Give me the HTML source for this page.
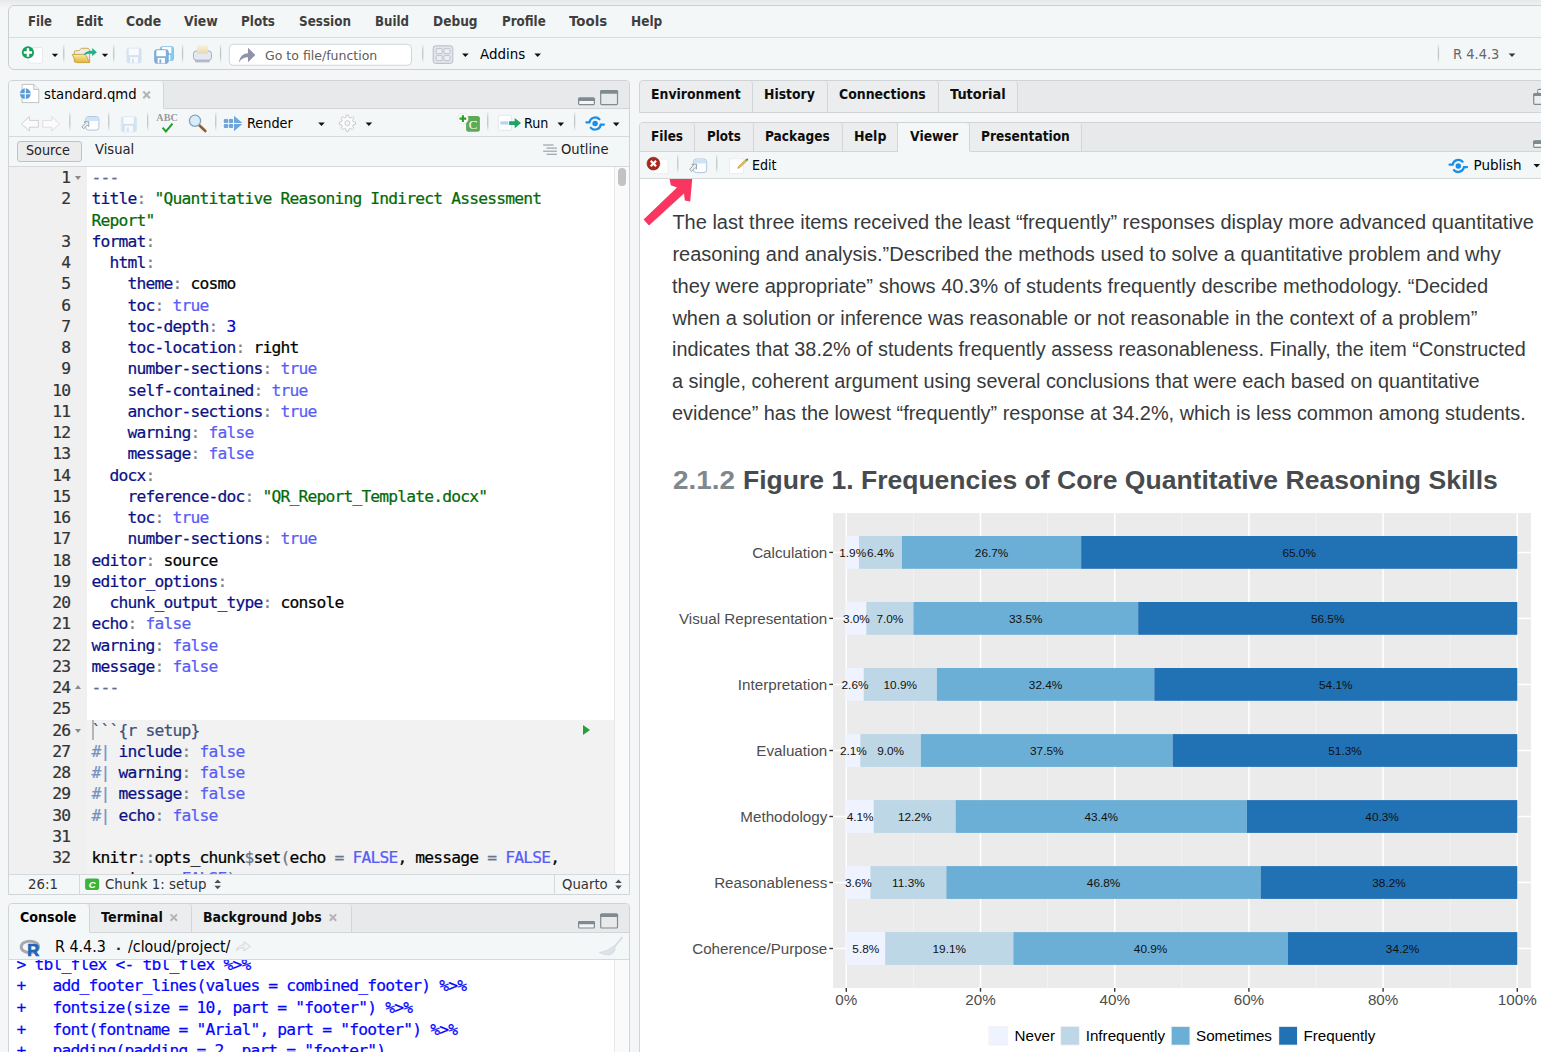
<!DOCTYPE html>
<html lang="en">
<head>
<meta charset="utf-8">
<title>RStudio</title>
<style>
html,body{margin:0;padding:0;}
body{width:1541px;height:1052px;overflow:hidden;position:relative;background:#f5f6f7;font-family:"DejaVu Sans","Liberation Sans",sans-serif;font-size:13.5px;}
div,svg{position:absolute;box-sizing:border-box;}
.t{position:absolute;white-space:pre;line-height:20px;height:20px;transform-origin:0 50%;}
.pane{border:1px solid #d1d4d7;border-radius:4px 4px 0 0;background:#f4f7f8;overflow:hidden;}
.strip{background:#e8e9eb;left:0;right:0;top:0;border-bottom:1px solid #d3d6d9;}
.tab{top:0;border-right:1px solid #d3d6d9;border-bottom:1px solid #d3d6d9;border-radius:3px 4px 0 0;background:#ecedef;}
.tab.first{border-radius:3px 4px 0 0;}
.tab.sel{background:#f4f7f8;border-bottom-color:#f4f7f8;}
.hl{left:0;right:0;height:1px;background:#d6d9dc;}
.sep{width:1px;background:#cfd2d5;box-shadow:1px 0 0 #fff;}
.arr{width:0;height:0;border-left:3.5px solid transparent;border-right:3.5px solid transparent;border-top:4px solid #222;}
.code{font-family:"DejaVu Sans Mono","Liberation Mono",monospace;font-size:16.3px;letter-spacing:-0.81px;-webkit-text-stroke:0.22px currentColor;white-space:pre;line-height:21.25px;height:21.25px;}
.ln{text-align:right;color:#333;}
</style>
</head>
<body>
<!-- top gradient -->
<div style="left:0;top:0;width:1541px;height:8px;background:linear-gradient(#e7e8ea,#f5f6f7);"></div>
<!-- main menubar + toolbar frame -->
<div style="left:8px;top:5px;width:1545px;height:65px;border:1px solid #cdd0d3;border-radius:6px;background:#f4f7f8;">
  <div class="hl" style="top:31px;background:#d9dcde;"></div>
</div>

<!-- SOURCE PANE -->
<div class="pane" id="src" style="left:8px;top:80px;width:622px;height:815px;">
  <div class="strip" style="height:28px;"></div>
  <div class="tab first sel" style="left:0;width:155px;height:28px;"></div>
  <div class="hl" style="top:55px;"></div>
  <div class="hl" style="top:85px;"></div>
  <!-- Source button -->
  <div style="left:8px;top:60px;width:65px;height:21px;border:1px solid #b9c3cd;border-radius:3px;background:#ececec;"></div>
  <div id="ed" style="left:0;top:86px;width:620px;height:707px;background:#fff;overflow:hidden;">
<div style="left:0;top:0;width:78px;height:707px;background:#f0f0f0;"></div>
<div style="left:78px;top:552.50px;width:527px;height:300px;background:#f2f2f2;"></div>
<div style="left:605px;top:0;width:15px;height:707px;background:#fafafa;border-left:1px solid #e8e8e8;"></div>
<div style="left:609px;top:1px;width:8px;height:18px;border-radius:4px;background:#c2c2c2;"></div>
<div class="code ln" style="left:0;top:0.00px;width:61.2px;">1</div>
<div style="left:66px;top:9.00px;border-left:3px solid transparent;border-right:3px solid transparent;border-top:4px solid #8a8a8a;width:0;height:0;"></div>
<div class="code cl" style="left:82.6px;top:0.00px;"><span style="color:#5d6d8e">---</span></div>
<div class="code ln" style="left:0;top:21.25px;width:61.2px;">2</div>
<div class="code cl" style="left:82.6px;top:21.25px;"><span style="color:#0b1085">title</span><span style="color:#77828e">:</span> <span style="color:#036a07">&quot;Quantitative Reasoning Indirect Assessment</span></div>
<div class="code cl" style="left:82.6px;top:42.50px;"><span style="color:#036a07">Report&quot;</span></div>
<div class="code ln" style="left:0;top:63.75px;width:61.2px;">3</div>
<div class="code cl" style="left:82.6px;top:63.75px;"><span style="color:#0b1085">format</span><span style="color:#77828e">:</span></div>
<div class="code ln" style="left:0;top:85.00px;width:61.2px;">4</div>
<div class="code cl" style="left:82.6px;top:85.00px;">  <span style="color:#0b1085">html</span><span style="color:#77828e">:</span></div>
<div class="code ln" style="left:0;top:106.25px;width:61.2px;">5</div>
<div class="code cl" style="left:82.6px;top:106.25px;">    <span style="color:#0b1085">theme</span><span style="color:#77828e">:</span> <span style="color:#000">cosmo</span></div>
<div class="code ln" style="left:0;top:127.50px;width:61.2px;">6</div>
<div class="code cl" style="left:82.6px;top:127.50px;">    <span style="color:#0b1085">toc</span><span style="color:#77828e">:</span> <span style="color:#585cf6">true</span></div>
<div class="code ln" style="left:0;top:148.75px;width:61.2px;">7</div>
<div class="code cl" style="left:82.6px;top:148.75px;">    <span style="color:#0b1085">toc-depth</span><span style="color:#77828e">:</span> <span style="color:#0000cd">3</span></div>
<div class="code ln" style="left:0;top:170.00px;width:61.2px;">8</div>
<div class="code cl" style="left:82.6px;top:170.00px;">    <span style="color:#0b1085">toc-location</span><span style="color:#77828e">:</span> <span style="color:#000">right</span></div>
<div class="code ln" style="left:0;top:191.25px;width:61.2px;">9</div>
<div class="code cl" style="left:82.6px;top:191.25px;">    <span style="color:#0b1085">number-sections</span><span style="color:#77828e">:</span> <span style="color:#585cf6">true</span></div>
<div class="code ln" style="left:0;top:212.50px;width:61.2px;">10</div>
<div class="code cl" style="left:82.6px;top:212.50px;">    <span style="color:#0b1085">self-contained</span><span style="color:#77828e">:</span> <span style="color:#585cf6">true</span></div>
<div class="code ln" style="left:0;top:233.75px;width:61.2px;">11</div>
<div class="code cl" style="left:82.6px;top:233.75px;">    <span style="color:#0b1085">anchor-sections</span><span style="color:#77828e">:</span> <span style="color:#585cf6">true</span></div>
<div class="code ln" style="left:0;top:255.00px;width:61.2px;">12</div>
<div class="code cl" style="left:82.6px;top:255.00px;">    <span style="color:#0b1085">warning</span><span style="color:#77828e">:</span> <span style="color:#585cf6">false</span></div>
<div class="code ln" style="left:0;top:276.25px;width:61.2px;">13</div>
<div class="code cl" style="left:82.6px;top:276.25px;">    <span style="color:#0b1085">message</span><span style="color:#77828e">:</span> <span style="color:#585cf6">false</span></div>
<div class="code ln" style="left:0;top:297.50px;width:61.2px;">14</div>
<div class="code cl" style="left:82.6px;top:297.50px;">  <span style="color:#0b1085">docx</span><span style="color:#77828e">:</span></div>
<div class="code ln" style="left:0;top:318.75px;width:61.2px;">15</div>
<div class="code cl" style="left:82.6px;top:318.75px;">    <span style="color:#0b1085">reference-doc</span><span style="color:#77828e">:</span> <span style="color:#036a07">&quot;QR_Report_Template.docx&quot;</span></div>
<div class="code ln" style="left:0;top:340.00px;width:61.2px;">16</div>
<div class="code cl" style="left:82.6px;top:340.00px;">    <span style="color:#0b1085">toc</span><span style="color:#77828e">:</span> <span style="color:#585cf6">true</span></div>
<div class="code ln" style="left:0;top:361.25px;width:61.2px;">17</div>
<div class="code cl" style="left:82.6px;top:361.25px;">    <span style="color:#0b1085">number-sections</span><span style="color:#77828e">:</span> <span style="color:#585cf6">true</span></div>
<div class="code ln" style="left:0;top:382.50px;width:61.2px;">18</div>
<div class="code cl" style="left:82.6px;top:382.50px;"><span style="color:#0b1085">editor</span><span style="color:#77828e">:</span> <span style="color:#000">source</span></div>
<div class="code ln" style="left:0;top:403.75px;width:61.2px;">19</div>
<div class="code cl" style="left:82.6px;top:403.75px;"><span style="color:#0b1085">editor_options</span><span style="color:#77828e">:</span></div>
<div class="code ln" style="left:0;top:425.00px;width:61.2px;">20</div>
<div class="code cl" style="left:82.6px;top:425.00px;">  <span style="color:#0b1085">chunk_output_type</span><span style="color:#77828e">:</span> <span style="color:#000">console</span></div>
<div class="code ln" style="left:0;top:446.25px;width:61.2px;">21</div>
<div class="code cl" style="left:82.6px;top:446.25px;"><span style="color:#0b1085">echo</span><span style="color:#77828e">:</span> <span style="color:#585cf6">false</span></div>
<div class="code ln" style="left:0;top:467.50px;width:61.2px;">22</div>
<div class="code cl" style="left:82.6px;top:467.50px;"><span style="color:#0b1085">warning</span><span style="color:#77828e">:</span> <span style="color:#585cf6">false</span></div>
<div class="code ln" style="left:0;top:488.75px;width:61.2px;">23</div>
<div class="code cl" style="left:82.6px;top:488.75px;"><span style="color:#0b1085">message</span><span style="color:#77828e">:</span> <span style="color:#585cf6">false</span></div>
<div class="code ln" style="left:0;top:510.00px;width:61.2px;">24</div>
<div style="left:66px;top:518.00px;border-left:3px solid transparent;border-right:3px solid transparent;border-bottom:4px solid #8a8a8a;width:0;height:0;"></div>
<div class="code cl" style="left:82.6px;top:510.00px;"><span style="color:#5d6d8e">---</span></div>
<div class="code ln" style="left:0;top:531.25px;width:61.2px;">25</div>
<div class="code ln" style="left:0;top:552.50px;width:61.2px;">26</div>
<div style="left:66px;top:561.50px;border-left:3px solid transparent;border-right:3px solid transparent;border-top:4px solid #8a8a8a;width:0;height:0;"></div>
<div class="code cl" style="left:82.6px;top:552.50px;"><span style="color:#3f4f7d">```{r setup}</span></div>
<div class="code ln" style="left:0;top:573.75px;width:61.2px;">27</div>
<div class="code cl" style="left:82.6px;top:573.75px;"><span style="color:#7593c2">#| </span><span style="color:#0b1085">include</span><span style="color:#77828e">:</span> <span style="color:#585cf6">false</span></div>
<div class="code ln" style="left:0;top:595.00px;width:61.2px;">28</div>
<div class="code cl" style="left:82.6px;top:595.00px;"><span style="color:#7593c2">#| </span><span style="color:#0b1085">warning</span><span style="color:#77828e">:</span> <span style="color:#585cf6">false</span></div>
<div class="code ln" style="left:0;top:616.25px;width:61.2px;">29</div>
<div class="code cl" style="left:82.6px;top:616.25px;"><span style="color:#7593c2">#| </span><span style="color:#0b1085">message</span><span style="color:#77828e">:</span> <span style="color:#585cf6">false</span></div>
<div class="code ln" style="left:0;top:637.50px;width:61.2px;">30</div>
<div class="code cl" style="left:82.6px;top:637.50px;"><span style="color:#7593c2">#| </span><span style="color:#0b1085">echo</span><span style="color:#77828e">:</span> <span style="color:#585cf6">false</span></div>
<div class="code ln" style="left:0;top:658.75px;width:61.2px;">31</div>
<div class="code ln" style="left:0;top:680.00px;width:61.2px;">32</div>
<div class="code cl" style="left:82.6px;top:680.00px;">knitr<span style="color:#687687">::</span>opts_chunk<span style="color:#687687">$</span>set<span style="color:#687687">(</span>echo <span style="color:#687687">=</span> <span style="color:#585cf6">FALSE</span>, message <span style="color:#687687">=</span> <span style="color:#585cf6">FALSE</span>,</div>
<div class="code cl" style="left:82.6px;top:701.25px;">warning <span style="color:#687687">=</span> <span style="color:#585cf6">FALSE</span><span style="color:#687687">)</span></div>
<div style="left:83px;top:553.00px;width:2px;height:20px;background:#b5b5b5;"></div>
<div style="left:574px;top:558.00px;width:0;height:0;border-top:5px solid transparent;border-bottom:5px solid transparent;border-left:7px solid #2a9d3c;"></div>
</div>
  <!-- status bar -->
  <div style="left:0;right:0;top:793px;height:22px;background:#f4f7f8;border-top:1px solid #d6d9dc;"></div>
  <div style="left:70px;top:794px;width:1px;height:21px;background:#d6d9dc;"></div>
  <div style="left:545px;top:794px;width:1px;height:21px;background:#d6d9dc;"></div>
</div>

<!-- CONSOLE PANE -->
<div class="pane" id="con" style="left:8px;top:903px;width:622px;height:160px;">
  <div class="strip" style="height:29px;"></div>
  <div class="tab first sel" style="left:0;width:81px;height:29px;"></div>
  <div class="tab" style="left:81px;width:102px;height:29px;"></div>
  <div class="tab" style="left:183px;width:160px;height:29px;"></div>
  <div class="hl" style="top:55px;"></div>
  <div id="co" style="left:0;top:56px;width:620px;height:100px;background:#fff;overflow:hidden;">
<div style="left:605px;top:0;width:15px;height:100px;background:#fafafa;border-left:1px solid #e8e8e8;"></div>
<div class="code cc" style="left:7.6px;top:-6.20px;line-height:21.6px;color:#0505ff;">&gt; tbl_flex &lt;- tbl_flex %&gt;%</div>
<div class="code cc" style="left:7.6px;top:15.40px;line-height:21.6px;color:#0505ff;">+   add_footer_lines(values = combined_footer) %&gt;%</div>
<div class="code cc" style="left:7.6px;top:37.00px;line-height:21.6px;color:#0505ff;">+   fontsize(size = 10, part = &quot;footer&quot;) %&gt;%</div>
<div class="code cc" style="left:7.6px;top:58.60px;line-height:21.6px;color:#0505ff;">+   font(fontname = &quot;Arial&quot;, part = &quot;footer&quot;) %&gt;%</div>
<div class="code cc" style="left:7.6px;top:80.20px;line-height:21.6px;color:#0505ff;">+   padding(padding = 2, part = &quot;footer&quot;)</div>
</div>
</div>

<!-- ENVIRONMENT PANE (collapsed) -->
<div class="pane" id="env" style="left:639px;top:80px;width:920px;height:33px;border-radius:4px 0 0 0;background:#e8e9eb;">
  <div class="tab first" style="left:0;width:113px;height:32px;border-bottom:none;"></div>
  <div class="tab" style="left:113px;width:75px;height:32px;border-bottom:none;"></div>
  <div class="tab" style="left:188px;width:111px;height:32px;border-bottom:none;"></div>
  <div class="tab" style="left:299px;width:79px;height:32px;border-bottom:none;"></div>
</div>

<!-- VIEWER PANE -->
<div class="pane" id="vw" style="left:639px;top:122px;width:920px;height:940px;border-radius:4px 0 0 0;">
  <div class="strip" style="height:29px;"></div>
  <div class="tab first" style="left:0;width:55px;height:29px;"></div>
  <div class="tab" style="left:55px;width:59px;height:29px;"></div>
  <div class="tab" style="left:114px;width:89px;height:29px;"></div>
  <div class="tab" style="left:203px;width:55px;height:29px;"></div>
  <div class="tab sel" style="left:258px;width:72px;height:29px;"></div>
  <div class="tab" style="left:330px;width:112px;height:29px;"></div>
  <div class="hl" style="top:55px;"></div>
  <div style="left:0;top:56px;width:920px;height:900px;background:#fff;"></div>
</div>

<!--VIEWER-->
<svg style="left:640px;top:500px;" width="901" height="552" viewBox="0 0 901 552" font-family="Liberation Sans, sans-serif">
<rect x="193" y="13" width="698" height="475" fill="#ebebeb"/>
<line x1="273.4" x2="273.4" y1="13" y2="488" stroke="#f5f5f5" stroke-width="0.8"/>
<line x1="407.6" x2="407.6" y1="13" y2="488" stroke="#f5f5f5" stroke-width="0.8"/>
<line x1="541.8" x2="541.8" y1="13" y2="488" stroke="#f5f5f5" stroke-width="0.8"/>
<line x1="676.0" x2="676.0" y1="13" y2="488" stroke="#f5f5f5" stroke-width="0.8"/>
<line x1="810.2" x2="810.2" y1="13" y2="488" stroke="#f5f5f5" stroke-width="0.8"/>
<line x1="206.3" x2="206.3" y1="13" y2="488" stroke="#fff" stroke-width="1.5"/>
<line x1="206.3" x2="206.3" y1="488" y2="491.7" stroke="#333" stroke-width="1.4"/>
<text x="206.3" y="504.6" font-size="15.2" fill="#4d4d4d" text-anchor="middle">0%</text>
<line x1="340.5" x2="340.5" y1="13" y2="488" stroke="#fff" stroke-width="1.5"/>
<line x1="340.5" x2="340.5" y1="488" y2="491.7" stroke="#333" stroke-width="1.4"/>
<text x="340.5" y="504.6" font-size="15.2" fill="#4d4d4d" text-anchor="middle">20%</text>
<line x1="474.7" x2="474.7" y1="13" y2="488" stroke="#fff" stroke-width="1.5"/>
<line x1="474.7" x2="474.7" y1="488" y2="491.7" stroke="#333" stroke-width="1.4"/>
<text x="474.7" y="504.6" font-size="15.2" fill="#4d4d4d" text-anchor="middle">40%</text>
<line x1="608.9" x2="608.9" y1="13" y2="488" stroke="#fff" stroke-width="1.5"/>
<line x1="608.9" x2="608.9" y1="488" y2="491.7" stroke="#333" stroke-width="1.4"/>
<text x="608.9" y="504.6" font-size="15.2" fill="#4d4d4d" text-anchor="middle">60%</text>
<line x1="743.1" x2="743.1" y1="13" y2="488" stroke="#fff" stroke-width="1.5"/>
<line x1="743.1" x2="743.1" y1="488" y2="491.7" stroke="#333" stroke-width="1.4"/>
<text x="743.1" y="504.6" font-size="15.2" fill="#4d4d4d" text-anchor="middle">80%</text>
<line x1="877.3" x2="877.3" y1="13" y2="488" stroke="#fff" stroke-width="1.5"/>
<line x1="877.3" x2="877.3" y1="488" y2="491.7" stroke="#333" stroke-width="1.4"/>
<text x="877.3" y="504.6" font-size="15.2" fill="#4d4d4d" text-anchor="middle">100%</text>
<line x1="193" x2="891" y1="52.4" y2="52.4" stroke="#fff" stroke-width="1.5"/>
<line x1="193" x2="891" y1="118.4" y2="118.4" stroke="#fff" stroke-width="1.5"/>
<line x1="193" x2="891" y1="184.4" y2="184.4" stroke="#fff" stroke-width="1.5"/>
<line x1="193" x2="891" y1="250.5" y2="250.5" stroke="#fff" stroke-width="1.5"/>
<line x1="193" x2="891" y1="316.5" y2="316.5" stroke="#fff" stroke-width="1.5"/>
<line x1="193" x2="891" y1="382.5" y2="382.5" stroke="#fff" stroke-width="1.5"/>
<line x1="193" x2="891" y1="448.5" y2="448.5" stroke="#fff" stroke-width="1.5"/>
<line x1="189.3" x2="193" y1="52.4" y2="52.4" stroke="#333" stroke-width="1.4"/>
<text x="187.29999999999995" y="57.7" font-size="15.2" fill="#4d4d4d" text-anchor="end">Calculation</text>
<rect x="206.30" y="36.0" width="12.75" height="32.8" fill="#eff3ff"/>
<rect x="219.05" y="36.0" width="42.94" height="32.8" fill="#bdd7e7"/>
<rect x="261.99" y="36.0" width="179.16" height="32.8" fill="#6baed6"/>
<rect x="441.15" y="36.0" width="436.15" height="32.8" fill="#2171b5"/>
<text x="212.7" y="56.6" font-size="11.8" fill="#111" text-anchor="middle">1.9%</text>
<text x="240.5" y="56.6" font-size="11.8" fill="#111" text-anchor="middle">6.4%</text>
<text x="351.6" y="56.6" font-size="11.8" fill="#111" text-anchor="middle">26.7%</text>
<text x="659.2" y="56.6" font-size="11.8" fill="#111" text-anchor="middle">65.0%</text>
<line x1="189.3" x2="193" y1="118.4" y2="118.4" stroke="#333" stroke-width="1.4"/>
<text x="187.29999999999995" y="123.7" font-size="15.2" fill="#4d4d4d" text-anchor="end">Visual Representation</text>
<rect x="206.30" y="102.0" width="20.13" height="32.8" fill="#eff3ff"/>
<rect x="226.43" y="102.0" width="46.97" height="32.8" fill="#bdd7e7"/>
<rect x="273.40" y="102.0" width="224.78" height="32.8" fill="#6baed6"/>
<rect x="498.18" y="102.0" width="379.12" height="32.8" fill="#2171b5"/>
<text x="216.4" y="122.6" font-size="11.8" fill="#111" text-anchor="middle">3.0%</text>
<text x="249.9" y="122.6" font-size="11.8" fill="#111" text-anchor="middle">7.0%</text>
<text x="385.8" y="122.6" font-size="11.8" fill="#111" text-anchor="middle">33.5%</text>
<text x="687.7" y="122.6" font-size="11.8" fill="#111" text-anchor="middle">56.5%</text>
<line x1="189.3" x2="193" y1="184.4" y2="184.4" stroke="#333" stroke-width="1.4"/>
<text x="187.29999999999995" y="189.7" font-size="15.2" fill="#4d4d4d" text-anchor="end">Interpretation</text>
<rect x="206.30" y="168.0" width="17.45" height="32.8" fill="#eff3ff"/>
<rect x="223.75" y="168.0" width="73.14" height="32.8" fill="#bdd7e7"/>
<rect x="296.88" y="168.0" width="217.40" height="32.8" fill="#6baed6"/>
<rect x="514.29" y="168.0" width="363.01" height="32.8" fill="#2171b5"/>
<text x="215.0" y="188.6" font-size="11.8" fill="#111" text-anchor="middle">2.6%</text>
<text x="260.3" y="188.6" font-size="11.8" fill="#111" text-anchor="middle">10.9%</text>
<text x="405.6" y="188.6" font-size="11.8" fill="#111" text-anchor="middle">32.4%</text>
<text x="695.8" y="188.6" font-size="11.8" fill="#111" text-anchor="middle">54.1%</text>
<line x1="189.3" x2="193" y1="250.5" y2="250.5" stroke="#333" stroke-width="1.4"/>
<text x="187.29999999999995" y="255.8" font-size="15.2" fill="#4d4d4d" text-anchor="end">Evaluation</text>
<rect x="206.30" y="234.1" width="14.11" height="32.8" fill="#eff3ff"/>
<rect x="220.41" y="234.1" width="60.45" height="32.8" fill="#bdd7e7"/>
<rect x="280.86" y="234.1" width="251.88" height="32.8" fill="#6baed6"/>
<rect x="532.73" y="234.1" width="344.57" height="32.8" fill="#2171b5"/>
<text x="213.4" y="254.7" font-size="11.8" fill="#111" text-anchor="middle">2.1%</text>
<text x="250.6" y="254.7" font-size="11.8" fill="#111" text-anchor="middle">9.0%</text>
<text x="406.8" y="254.7" font-size="11.8" fill="#111" text-anchor="middle">37.5%</text>
<text x="705.0" y="254.7" font-size="11.8" fill="#111" text-anchor="middle">51.3%</text>
<line x1="189.3" x2="193" y1="316.5" y2="316.5" stroke="#333" stroke-width="1.4"/>
<text x="187.29999999999995" y="321.8" font-size="15.2" fill="#4d4d4d" text-anchor="end">Methodology</text>
<rect x="206.30" y="300.1" width="27.51" height="32.8" fill="#eff3ff"/>
<rect x="233.81" y="300.1" width="81.86" height="32.8" fill="#bdd7e7"/>
<rect x="315.67" y="300.1" width="291.21" height="32.8" fill="#6baed6"/>
<rect x="606.89" y="300.1" width="270.41" height="32.8" fill="#2171b5"/>
<text x="220.1" y="320.7" font-size="11.8" fill="#111" text-anchor="middle">4.1%</text>
<text x="274.7" y="320.7" font-size="11.8" fill="#111" text-anchor="middle">12.2%</text>
<text x="461.3" y="320.7" font-size="11.8" fill="#111" text-anchor="middle">43.4%</text>
<text x="742.1" y="320.7" font-size="11.8" fill="#111" text-anchor="middle">40.3%</text>
<line x1="189.3" x2="193" y1="382.5" y2="382.5" stroke="#333" stroke-width="1.4"/>
<text x="187.29999999999995" y="387.8" font-size="15.2" fill="#4d4d4d" text-anchor="end">Reasonableness</text>
<rect x="206.30" y="366.1" width="24.18" height="32.8" fill="#eff3ff"/>
<rect x="230.48" y="366.1" width="75.90" height="32.8" fill="#bdd7e7"/>
<rect x="306.38" y="366.1" width="314.34" height="32.8" fill="#6baed6"/>
<rect x="620.72" y="366.1" width="256.58" height="32.8" fill="#2171b5"/>
<text x="218.4" y="386.7" font-size="11.8" fill="#111" text-anchor="middle">3.6%</text>
<text x="268.4" y="386.7" font-size="11.8" fill="#111" text-anchor="middle">11.3%</text>
<text x="463.6" y="386.7" font-size="11.8" fill="#111" text-anchor="middle">46.8%</text>
<text x="749.0" y="386.7" font-size="11.8" fill="#111" text-anchor="middle">38.2%</text>
<line x1="189.3" x2="193" y1="448.5" y2="448.5" stroke="#333" stroke-width="1.4"/>
<text x="187.29999999999995" y="453.8" font-size="15.2" fill="#4d4d4d" text-anchor="end">Coherence/Purpose</text>
<rect x="206.30" y="432.1" width="38.92" height="32.8" fill="#eff3ff"/>
<rect x="245.22" y="432.1" width="128.16" height="32.8" fill="#bdd7e7"/>
<rect x="373.38" y="432.1" width="274.44" height="32.8" fill="#6baed6"/>
<rect x="647.82" y="432.1" width="229.48" height="32.8" fill="#2171b5"/>
<text x="225.8" y="452.7" font-size="11.8" fill="#111" text-anchor="middle">5.8%</text>
<text x="309.3" y="452.7" font-size="11.8" fill="#111" text-anchor="middle">19.1%</text>
<text x="510.6" y="452.7" font-size="11.8" fill="#111" text-anchor="middle">40.9%</text>
<text x="762.6" y="452.7" font-size="11.8" fill="#111" text-anchor="middle">34.2%</text>
<rect x="348.5" y="526" width="19.6" height="19.6" fill="#f2f2f2"/>
<rect x="349.4" y="526.9" width="17.8" height="17.8" fill="#eff3ff"/>
<text x="374.6" y="540.8" font-size="15.2" fill="#000">Never</text>
<rect x="420.2" y="526" width="19.6" height="19.6" fill="#f2f2f2"/>
<rect x="421.1" y="526.9" width="17.8" height="17.8" fill="#bdd7e7"/>
<text x="445.7" y="540.8" font-size="15.2" fill="#000">Infrequently</text>
<rect x="530.8" y="526" width="19.6" height="19.6" fill="#f2f2f2"/>
<rect x="531.7" y="526.9" width="17.8" height="17.8" fill="#6baed6"/>
<text x="556.0" y="540.8" font-size="15.2" fill="#000">Sometimes</text>
<rect x="638.3" y="526" width="19.6" height="19.6" fill="#f2f2f2"/>
<rect x="639.2" y="526.9" width="17.8" height="17.8" fill="#2171b5"/>
<text x="663.5" y="540.8" font-size="15.2" fill="#000">Frequently</text>
</svg>
<svg style="left:0;top:0;" width="1541" height="1052" viewBox="0 0 1541 1052">
<defs><linearGradient id="sg" x1="0" y1="0" x2="0" y2="1"><stop offset="0" stop-color="#c4c7ca" stop-opacity="0.15"/><stop offset="0.3" stop-color="#c4c7ca"/><stop offset="0.7" stop-color="#c4c7ca"/><stop offset="1" stop-color="#c4c7ca" stop-opacity="0.15"/></linearGradient><linearGradient id="pg" x1="0" y1="0" x2="0" y2="1"><stop offset="0" stop-color="#f8f2dc"/><stop offset="1" stop-color="#ead8ae"/></linearGradient></defs>
<rect x="28.400" y="47.500" width="14" height="15.700" rx="1" fill="#fff" stroke="#dfe3ea" stroke-width="0.8"/>
<circle cx="27.950" cy="52.450" r="6.100" fill="#12a05c"/>
<path d="M27.950 48.250v8.400M23.750 52.450h8.400" stroke="#fff" stroke-width="2.500"/>
<path d="M51.8 53.7h6.4l-3.2 3.4z" fill="#111"/>
<rect x="63.1" y="44.5" width="1.3" height="18.0" fill="url(#sg)"/>
<defs><linearGradient id="fg" x1="0" y1="0" x2="0" y2="1"><stop offset="0" stop-color="#f8eba8"/><stop offset="1" stop-color="#e0b538"/></linearGradient></defs>
<path d="M74.300 54.400v-2.400q0-1.300 1.300-1.300h3.300l2.600-2.400h6.500l1.600 1.400v12.300h-15.300z" fill="#ececec" stroke="#c9a23c" stroke-width="0.9" stroke-linejoin="round"/>
<path d="M72.100 54.400h13.300l4.400 8.200h-13.500z" fill="url(#fg)" stroke="#c9a23c" stroke-width="0.9" stroke-linejoin="round"/>
<path d="M83.800 55.200c0.700-3 3.400-4.500 8.400-4.500v-2.600l4.700 4.100-4.700 4.100v-2.600c-3.800-0.100-6.300 0.300-8.400 1.500z" fill="#1cb48a"/>
<path d="M101.8 53.7h6.4l-3.2 3.4z" fill="#111"/>
<rect x="113.1" y="44.5" width="1.3" height="18.0" fill="url(#sg)"/>
<g opacity="1"><rect x="126.8" y="48.1" width="14.5" height="14.9" rx="1.8" fill="#d2e2f1" stroke="#dbe7f3" stroke-width="0.8"/><rect x="128.7" y="48.5" width="10.1" height="6.6" fill="#f8fafc"/><rect x="130.1" y="57.1" width="7.7" height="5.8" fill="#f8fafc"/><rect x="131.9" y="58.7" width="2.0" height="4.2" fill="#d2e2f1"/></g>
<g opacity="1"><rect x="160.4" y="46.7" width="13.1" height="13.8" rx="1.8" fill="#7ccff0" stroke="#7fb6e0" stroke-width="0.8"/><rect x="162.1" y="47.1" width="9.2" height="6.1" fill="#fff"/><rect x="163.3" y="55.1" width="7.0" height="5.4" fill="#fff"/><rect x="165.0" y="56.5" width="1.8" height="3.9" fill="#7ccff0"/></g>
<g opacity="1"><rect x="154.7" y="49.8" width="13.5" height="13.5" rx="1.8" fill="#7fb0e0" stroke="#6b9ccf" stroke-width="0.8"/><rect x="156.4" y="50.2" width="9.4" height="6.0" fill="#fff"/><rect x="157.7" y="58.0" width="7.2" height="5.3" fill="#fff"/><rect x="159.4" y="59.4" width="1.9" height="3.9" fill="#7fb0e0"/></g>
<rect x="181.9" y="44.5" width="1.3" height="18.0" fill="url(#sg)"/>
<rect x="195" y="59.600" width="14.800" height="2.800" rx="0.8" fill="#b9c0cd"/>
<rect x="193.500" y="51" width="18" height="9.200" rx="2.600" fill="#e4e8f1" stroke="#9ea6b8" stroke-width="0.9"/>
<rect x="197" y="45.100" width="10.900" height="8.700" fill="url(#pg)"/>
<rect x="219.9" y="44.5" width="1.3" height="18.0" fill="url(#sg)"/>
<rect x="229.3" y="44.3" width="182.2" height="21" rx="4" fill="#fff" stroke="#d3d6d9" stroke-width="1"/>
<path d="M239 62.5c0.8-6 4-9 9-9.2v-5.6l7.3 7.3-7.3 7.3v-5c-4 0-6.8 1.6-9 5.200z" fill="#8f92a8"/>
<rect x="422.1" y="44.5" width="1.3" height="18.0" fill="url(#sg)"/>
<rect x="433.2" y="45.8" width="19.6" height="17.6" rx="2.5" fill="#e3e4ec" stroke="#b9bcc9" stroke-width="1"/>
<rect x="436.2" y="48.6" width="6" height="5" rx="0.8" fill="#eeeff4" stroke="#b4b7c6" stroke-width="0.8"/>
<rect x="436.2" y="55.6" width="6" height="5" rx="0.8" fill="#eeeff4" stroke="#b4b7c6" stroke-width="0.8"/>
<rect x="444" y="48.6" width="6" height="5" rx="0.8" fill="#eeeff4" stroke="#b4b7c6" stroke-width="0.8"/>
<rect x="444" y="55.6" width="6" height="5" rx="0.8" fill="#eeeff4" stroke="#b4b7c6" stroke-width="0.8"/>
<path d="M462.1 53.4h6.6l-3.3 3.6z" fill="#111"/>
<path d="M534.4 53.4h6.6l-3.3 3.6z" fill="#111"/>
<rect x="1437.8" y="44.5" width="1.3" height="18.0" fill="url(#sg)"/>
<path d="M1508.7 53.5h6.6l-3.3 3.6z" fill="#333"/>
<path d="M22.1 84.4h11.7l5 5v13.2h-16.7z" fill="#fff" stroke="#b8bcc0" stroke-width="0.9"/>
<path d="M33.8 84.4v5h5" fill="#f2f2f2" stroke="#b8bcc0" stroke-width="0.9"/>
<circle cx="25.3" cy="93.7" r="5.4" fill="#5b9bd5"/><path d="M25.3 88.3v10.800M19.9 93.7h10.800" stroke="#fff" stroke-width="1.1"/>
<path d="M143.3 91.6l6.600 6.600M149.900 91.600l-6.600 6.600" stroke="#b3b3b3" stroke-width="2.100"/>
<rect x="578.6" y="98.2" width="15.800" height="6.400" rx="1" fill="#f3f5f6" stroke="#7f8b91" stroke-width="1.2"/>
<path d="M578 100.9v-1.900q0-1.500 1.500-1.500h14q1.500 0 1.500 1.500v1.900z" fill="#7f8b91"/>
<rect x="600.7" y="90.6" width="16.800" height="14" rx="1" fill="#e8e9eb" stroke="#7f8b91" stroke-width="1.2"/>
<path d="M600.100 93.7v-2.200q0-1.500 1.500-1.500h15q1.500 0 1.500 1.500v2.200z" fill="#7f8b91"/>
<rect x="578.6" y="921.6" width="15.800" height="6.400" rx="1" fill="#f3f5f6" stroke="#7f8b91" stroke-width="1.2"/>
<path d="M578 924.3v-1.900q0-1.500 1.500-1.500h14q1.500 0 1.500 1.500v1.900z" fill="#7f8b91"/>
<rect x="600.7" y="914.0" width="16.800" height="14" rx="1" fill="#e8e9eb" stroke="#7f8b91" stroke-width="1.2"/>
<path d="M600.100 917.1v-2.200q0-1.500 1.500-1.500h15q1.500 0 1.500 1.500v2.200z" fill="#7f8b91"/>
<path d="M21.400 123.800l8-7.200v3.800h9v6.800h-9v3.800z" fill="#fbfbfb" stroke="#cfcfcf" stroke-width="1"/>
<path d="M59.700 123.800l-8-7.200v3.800h-9v6.800h9v3.800z" fill="#fbfbfb" stroke="#dedede" stroke-width="1"/>
<rect x="69.2" y="112" width="1.3" height="18.599999999999994" fill="url(#sg)"/>
<rect x="85.6" y="116.5" width="13.300" height="13.600" rx="2.800" fill="#fcfdfe" stroke="#a9bed8" stroke-width="0.9"/>
<path d="M86.1 120.9v-1.700q0-2.200 2.200-2.200h7.900q2.200 0 2.200 2.200v1.700z" fill="#cfe3f7"/>
<path d="M88.8 121.6l-4.700 0.300 1.400 1.400 -3.700 3.500 1.900 1.900 3.600 -3.600 1.400 1.400z" fill="#eef1f4" stroke="#8f9aa6" stroke-width="0.9" stroke-linejoin="round"/>
<rect x="108.1" y="112" width="1.3" height="18.599999999999994" fill="url(#sg)"/>
<g opacity="1"><rect x="121.3" y="116.7" width="15.3" height="15.1" rx="1.8" fill="#d2e2f1" stroke="#dbe7f3" stroke-width="0.8"/><rect x="123.3" y="117.1" width="10.6" height="6.7" fill="#f8fafc"/><rect x="124.8" y="125.8" width="8.1" height="5.9" fill="#f8fafc"/><rect x="126.7" y="127.4" width="2.1" height="4.3" fill="#d2e2f1"/></g>
<rect x="147.0" y="112" width="1.3" height="18.599999999999994" fill="url(#sg)"/>
<text x="156.300" y="121" font-family="Liberation Serif, serif" font-weight="bold" font-size="9.5" fill="#9a9a9a" textLength="21.500" lengthAdjust="spacingAndGlyphs">ABC</text>
<path d="M162.600 127.600l3.300 3.800 6.600-7.800" fill="none" stroke="#1e9e2c" stroke-width="2"/>
<path d="M199 125l6.300 6" stroke="#9a5a28" stroke-width="2.600" stroke-linecap="round"/>
<circle cx="195" cy="120.800" r="5.600" fill="#d9ecf9" stroke="#7fa3c0" stroke-width="1.300"/>
<rect x="215.1" y="112" width="1.3" height="18.599999999999994" fill="url(#sg)"/>
<rect x="223.8" y="119" width="4.300" height="4.100" rx="1" fill="#6ea6dc"/>
<rect x="223.8" y="123.9" width="4.300" height="4.100" rx="1" fill="#6ea6dc"/>
<rect x="228.8" y="119" width="4.300" height="4.100" rx="1" fill="#6ea6dc"/>
<rect x="228.8" y="123.9" width="4.300" height="4.100" rx="1" fill="#6ea6dc"/>
<path d="M234 115.700l8.400 7.300h-8.400zM234 123.900h8.400l-8.400 7.300z" fill="#6ea6dc"/>
<path d="M318.2 122.5h6.6l-3.3 3.6z" fill="#111"/>
<path d="M355.5 122.1 L355.5 124.3 L353.2 124.8 L352.6 126.2 L353.9 128.2 L352.4 129.7 L350.4 128.4 L349.0 129.0 L348.5 131.3 L346.3 131.3 L345.8 129.0 L344.4 128.4 L342.4 129.7 L340.9 128.2 L342.2 126.2 L341.6 124.8 L339.3 124.3 L339.3 122.1 L341.6 121.6 L342.2 120.2 L340.9 118.2 L342.4 116.7 L344.4 118.0 L345.8 117.4 L346.3 115.1 L348.5 115.1 L349.0 117.4 L350.4 118.0 L352.4 116.7 L353.9 118.2 L352.6 120.2 L353.2 121.6z" fill="#fcfcfc" stroke="#c4c4c4" stroke-width="0.9" stroke-linejoin="round"/>
<circle cx="347.400" cy="123.200" r="2.500" fill="#f4f7f8" stroke="#c4c4c4" stroke-width="0.9"/>
<path d="M365.6 122.5h6.6l-3.3 3.6z" fill="#111"/>
<rect x="466.100" y="116" width="13.800" height="15.800" rx="2.500" fill="#5faa58"/>
<text x="473" y="128.800" font-family="Liberation Serif, serif" font-size="13" fill="#fff" text-anchor="middle">C</text>
<circle cx="462.900" cy="118.600" r="5.300" fill="#fff" stroke="#dcdcdc" stroke-width="0.6"/>
<path d="M462.900 115.200v6.800M459.500 118.600h6.800" stroke="#21a121" stroke-width="2.100"/>
<rect x="487.1" y="112" width="1.3" height="18.599999999999994" fill="url(#sg)"/>
<rect x="498.400" y="115.300" width="13.100" height="15" rx="1.500" fill="#fff" stroke="#dfe2e5" stroke-width="0.8"/>
<rect x="500.300" y="121.300" width="8" height="3.300" fill="#bcd3f5"/>
<path d="M509.100 121.300h5.600v-3.300l6.300 5.100-6.300 5.100v-3.300h-5.600z" fill="#1da462"/>
<path d="M557.5 122.6h6.6l-3.3 3.6z" fill="#111"/>
<rect x="574.0" y="112" width="1.3" height="18.599999999999994" fill="url(#sg)"/>
<g transform="translate(595.1,123.5) scale(0.94)" fill="none" stroke="#1a8fe8" stroke-width="2.400" stroke-linecap="round"><circle r="2.900" fill="#1a8fe8" stroke="none"/><path d="M-9.300 -1.300h3.300a6.200 6.200 0 0 1 10.600 -3.200"/><path d="M9.300 1.300h-3.300a6.200 6.200 0 0 1 -10.600 3.200"/></g>
<path d="M612.9 122.6h6.6l-3.3 3.6z" fill="#111"/>
<path d="M543.1 145.0H553.5" stroke="#9aa3ab" stroke-width="1.200"/>
<path d="M546.5 148.1H556.9" stroke="#9aa3ab" stroke-width="1.200"/>
<path d="M543.1 151.2H556.9" stroke="#9aa3ab" stroke-width="1.200"/>
<path d="M546.5 154.3H556.9" stroke="#9aa3ab" stroke-width="1.200"/>
<rect x="85.100" y="878.500" width="14" height="11.400" rx="1.800" fill="#3cb43c"/>
<text x="92.100" y="888" font-family="Liberation Sans, sans-serif" font-style="italic" font-weight="bold" font-size="9.500" fill="#fff" text-anchor="middle">C</text>
<path d="M214.4 883.1h6.600l-3.300 -3.600zM214.4 885.7h6.600l-3.300 3.600z" fill="#4a4f54"/>
<path d="M615.2 883.0h6.600l-3.300 -3.600zM615.2 885.6h6.600l-3.300 3.600z" fill="#4a4f54"/>
<path d="M170.600 914.400l6.400 6.400M177 914.400l-6.400 6.400" stroke="#b3b3b3" stroke-width="2"/>
<path d="M329.800 914.400l6.400 6.400M336.200 914.400l-6.400 6.400" stroke="#b3b3b3" stroke-width="2"/>
<ellipse cx="29.900" cy="946.900" rx="8.700" ry="5.700" fill="none" stroke="#a6aab0" stroke-width="3"/>
<text x="27.200" y="956.100" font-family="Liberation Sans, sans-serif" font-weight="bold" font-size="16.600" fill="#1f65b7" stroke="#1f65b7" stroke-width="0.700">R</text>
<path d="M236.500 950.500c1-4 4-5.600 7.500-5.600v-3.200l6.500 4.600-6.500 4.600v-3.200c-3 0-5.300 0.800-7.500 2.800z" fill="#f0f2f3" stroke="#cfd3d7" stroke-width="0.9"/>
<path d="M622.500 937l-9.500 11.500" stroke="#d3d9e0" stroke-width="1.800"/>
<path d="M612.800 946.500l2.500 2.300q-1 5-5.500 6-6 0.600-10.500-2.300 8-1 13.500-6z" fill="#dde2e8" stroke="#cdd3da" stroke-width="0.600"/>
<rect x="653.800" y="159" width="14.200" height="14.700" fill="#fff" stroke="#e6e8ea" stroke-width="0.700"/>
<circle cx="653.400" cy="163.600" r="6.400" fill="#a8281c"/><circle cx="653.400" cy="163.600" r="6.400" fill="none" stroke="#8c1f14" stroke-width="0.600"/>
<path d="M650.700 160.900l5.400 5.400M656.100 160.900l-5.400 5.400" stroke="#fff" stroke-width="2.200"/>
<rect x="677.1" y="154.5" width="1.3" height="18.0" fill="url(#sg)"/>
<rect x="693.4" y="159.0" width="13.300" height="13.600" rx="2.800" fill="#fcfdfe" stroke="#a9bed8" stroke-width="0.9"/>
<path d="M693.9 163.4v-1.700q0-2.200 2.200-2.200h7.900q2.200 0 2.200 2.200v1.700z" fill="#cfe3f7"/>
<path d="M696.6 164.1l-4.700 0.300 1.400 1.400 -3.700 3.500 1.900 1.900 3.600 -3.600 1.400 1.400z" fill="#eef1f4" stroke="#8f9aa6" stroke-width="0.9" stroke-linejoin="round"/>
<rect x="716.1" y="154.5" width="1.3" height="18.0" fill="url(#sg)"/>
<rect x="729.600" y="158.800" width="14" height="14.800" fill="#fff" stroke="#e6e8ea" stroke-width="0.700"/>
<path d="M737.800 168.400l0.900-2.200 7.600-7.100 1.200 1.300-7.600 7.100z" fill="#eebd4e" stroke="#a8802e" stroke-width="0.500"/><path d="M745.500 159.800l1.200 1.300 0.900-0.800-1.200-1.300z" fill="#4a9a4a"/><path d="M746.400 159l1.200 1.300 0.600-0.600q0.300-1.100-1.200-1.300z" fill="#cc3a2e"/>
<g transform="translate(1458.3,165.9) scale(0.94)" fill="none" stroke="#1a8fe8" stroke-width="2.400" stroke-linecap="round"><circle r="2.900" fill="#1a8fe8" stroke="none"/><path d="M-9.300 -1.300h3.300a6.200 6.200 0 0 1 10.600 -3.200"/><path d="M9.300 1.300h-3.300a6.200 6.200 0 0 1 -10.600 3.200"/></g>
<path d="M1533.5 164.0h6.6l-3.3 3.6z" fill="#111"/>
<path d="M1537.700 93.200v-2.300q0-1.500 1.500-1.500h6" fill="none" stroke="#7f8b91" stroke-width="1.300"/>
<path d="M1538.300 92v-1.300h6" fill="none" stroke="#f4f5f6" stroke-width="1"/>
<rect x="1533.700" y="94" width="12" height="10.300" rx="1" fill="#eceeef" stroke="#7f8b91" stroke-width="1.200"/>
<path d="M1533.100 96.100v-1.600q0-1.500 1.500-1.500h10v3.100z" fill="#7f8b91"/>
<rect x="1533.700" y="141" width="12" height="6.400" rx="1" fill="#f3f5f6" stroke="#7f8b91" stroke-width="1.200"/>
<path d="M1533.100 143.900v-2.100q0-1.500 1.500-1.500h10v3.600z" fill="#7f8b91"/>
<clipPath id="vc"><rect x="640" y="179" width="901" height="873"/></clipPath>
<path clip-path="url(#vc)" d="M643.600 219.600L677 187.400L670.800 185.300L669 176L692.500 176L690.200 201.400L684.800 200.400L684 193.600L649 225.600z" fill="#f8365f"/>
</svg>
<span class="t" style='left:28.3px;top:11.4px;font-family:"DejaVu Sans", "Liberation Sans", sans-serif;font-size:13.5px;color:#3f3f3f;font-weight:bold;transform:scaleX(0.8683);'>File</span>
<span class="t" style='left:75.6px;top:11.4px;font-family:"DejaVu Sans", "Liberation Sans", sans-serif;font-size:13.5px;color:#3f3f3f;font-weight:bold;transform:scaleX(0.9043);'>Edit</span>
<span class="t" style='left:125.8px;top:11.4px;font-family:"DejaVu Sans", "Liberation Sans", sans-serif;font-size:13.5px;color:#3f3f3f;font-weight:bold;transform:scaleX(0.9259);'>Code</span>
<span class="t" style='left:184.2px;top:11.4px;font-family:"DejaVu Sans", "Liberation Sans", sans-serif;font-size:13.5px;color:#3f3f3f;font-weight:bold;transform:scaleX(0.9241);'>View</span>
<span class="t" style='left:241.2px;top:11.4px;font-family:"DejaVu Sans", "Liberation Sans", sans-serif;font-size:13.5px;color:#3f3f3f;font-weight:bold;transform:scaleX(0.8878);'>Plots</span>
<span class="t" style='left:298.7px;top:11.4px;font-family:"DejaVu Sans", "Liberation Sans", sans-serif;font-size:13.5px;color:#3f3f3f;font-weight:bold;transform:scaleX(0.8894);'>Session</span>
<span class="t" style='left:374.5px;top:11.4px;font-family:"DejaVu Sans", "Liberation Sans", sans-serif;font-size:13.5px;color:#3f3f3f;font-weight:bold;transform:scaleX(0.8757);'>Build</span>
<span class="t" style='left:432.9px;top:11.4px;font-family:"DejaVu Sans", "Liberation Sans", sans-serif;font-size:13.5px;color:#3f3f3f;font-weight:bold;transform:scaleX(0.9044);'>Debug</span>
<span class="t" style='left:501.5px;top:11.4px;font-family:"DejaVu Sans", "Liberation Sans", sans-serif;font-size:13.5px;color:#3f3f3f;font-weight:bold;transform:scaleX(0.8806);'>Profile</span>
<span class="t" style='left:568.8px;top:11.4px;font-family:"DejaVu Sans", "Liberation Sans", sans-serif;font-size:13.5px;color:#3f3f3f;font-weight:bold;transform:scaleX(0.9886);'>Tools</span>
<span class="t" style='left:630.9px;top:11.4px;font-family:"DejaVu Sans", "Liberation Sans", sans-serif;font-size:13.5px;color:#3f3f3f;font-weight:bold;transform:scaleX(0.9007);'>Help</span>
<span class="t" style='left:265.4px;top:46.0px;font-family:"DejaVu Sans", "Liberation Sans", sans-serif;font-size:13px;color:#5c5c5c;transform:scaleX(0.9628);'>Go to file/function</span>
<span class="t" style='left:480.2px;top:44.2px;font-family:"DejaVu Sans", "Liberation Sans", sans-serif;font-size:13.5px;color:#000;transform:scaleX(0.9937);'>Addins</span>
<span class="t" style='left:1452.5px;top:43.7px;font-family:"DejaVu Sans", "Liberation Sans", sans-serif;font-size:13.5px;color:#666;transform:scaleX(0.9660);'>R 4.4.3</span>
<span class="t" style='left:43.7px;top:84.1px;font-family:"DejaVu Sans", "Liberation Sans", sans-serif;font-size:13.5px;color:#000;transform:scaleX(0.9802);'>standard.qmd</span>
<span class="t" style='left:247.3px;top:112.7px;font-family:"DejaVu Sans", "Liberation Sans", sans-serif;font-size:13.5px;color:#000;transform:scaleX(0.9529);'>Render</span>
<span class="t" style='left:524.1px;top:112.7px;font-family:"DejaVu Sans", "Liberation Sans", sans-serif;font-size:13.5px;color:#000;transform:scaleX(0.9424);'>Run</span>
<span class="t" style='left:25.8px;top:140.0px;font-family:"DejaVu Sans", "Liberation Sans", sans-serif;font-size:13.5px;color:#222;transform:scaleX(0.9466);'>Source</span>
<span class="t" style='left:94.9px;top:138.9px;font-family:"DejaVu Sans", "Liberation Sans", sans-serif;font-size:13.5px;color:#222;transform:scaleX(0.9724);'>Visual</span>
<span class="t" style='left:561.0px;top:138.7px;font-family:"DejaVu Sans", "Liberation Sans", sans-serif;font-size:13.5px;color:#222;transform:scaleX(0.9725);'>Outline</span>
<span class="t" style='left:27.5px;top:873.7px;font-family:"DejaVu Sans", "Liberation Sans", sans-serif;font-size:13.5px;color:#333;transform:scaleX(0.9859);'>26:1</span>
<span class="t" style='left:104.8px;top:873.7px;font-family:"DejaVu Sans", "Liberation Sans", sans-serif;font-size:13.5px;color:#333;transform:scaleX(0.9903);'>Chunk 1: setup</span>
<span class="t" style='left:561.6px;top:873.7px;font-family:"DejaVu Sans", "Liberation Sans", sans-serif;font-size:13.5px;color:#333;transform:scaleX(0.9815);'>Quarto</span>
<span class="t" style='left:20.2px;top:906.7px;font-family:"DejaVu Sans", "Liberation Sans", sans-serif;font-size:13.5px;color:#000;font-weight:bold;transform:scaleX(0.9417);'>Console</span>
<span class="t" style='left:100.7px;top:906.7px;font-family:"DejaVu Sans", "Liberation Sans", sans-serif;font-size:13.5px;color:#0d0d0d;font-weight:bold;transform:scaleX(0.9482);'>Terminal</span>
<span class="t" style='left:203.2px;top:906.7px;font-family:"DejaVu Sans", "Liberation Sans", sans-serif;font-size:13.5px;color:#0d0d0d;font-weight:bold;transform:scaleX(0.9313);'>Background Jobs</span>
<span class="t" style='left:55.2px;top:937.3px;font-family:"DejaVu Sans", "Liberation Sans", sans-serif;font-size:15px;color:#000;transform:scaleX(0.9520);'>R 4.4.3</span>
<span class="t" style='left:116.0px;top:938.6px;font-family:"DejaVu Sans", "Liberation Sans", sans-serif;font-size:13px;color:#222;font-weight:bold;'>·</span>
<span class="t" style='left:128.3px;top:937.3px;font-family:"DejaVu Sans", "Liberation Sans", sans-serif;font-size:15px;color:#000;transform:scaleX(0.9495);'>/cloud/project/</span>
<span class="t" style='left:650.9px;top:83.5px;font-family:"DejaVu Sans", "Liberation Sans", sans-serif;font-size:13.5px;color:#0d0d0d;font-weight:bold;transform:scaleX(0.9238);'>Environment</span>
<span class="t" style='left:764.4px;top:83.5px;font-family:"DejaVu Sans", "Liberation Sans", sans-serif;font-size:13.5px;color:#0d0d0d;font-weight:bold;transform:scaleX(0.9210);'>History</span>
<span class="t" style='left:839.2px;top:83.5px;font-family:"DejaVu Sans", "Liberation Sans", sans-serif;font-size:13.5px;color:#0d0d0d;font-weight:bold;transform:scaleX(0.9276);'>Connections</span>
<span class="t" style='left:950.2px;top:83.5px;font-family:"DejaVu Sans", "Liberation Sans", sans-serif;font-size:13.5px;color:#0d0d0d;font-weight:bold;transform:scaleX(0.9588);'>Tutorial</span>
<span class="t" style='left:650.9px;top:125.5px;font-family:"DejaVu Sans", "Liberation Sans", sans-serif;font-size:13.5px;color:#0d0d0d;font-weight:bold;transform:scaleX(0.8999);'>Files</span>
<span class="t" style='left:707.4px;top:125.5px;font-family:"DejaVu Sans", "Liberation Sans", sans-serif;font-size:13.5px;color:#0d0d0d;font-weight:bold;transform:scaleX(0.8826);'>Plots</span>
<span class="t" style='left:765.3px;top:125.5px;font-family:"DejaVu Sans", "Liberation Sans", sans-serif;font-size:13.5px;color:#0d0d0d;font-weight:bold;transform:scaleX(0.9037);'>Packages</span>
<span class="t" style='left:853.7px;top:125.5px;font-family:"DejaVu Sans", "Liberation Sans", sans-serif;font-size:13.5px;color:#0d0d0d;font-weight:bold;transform:scaleX(0.9324);'>Help</span>
<span class="t" style='left:909.6px;top:125.5px;font-family:"DejaVu Sans", "Liberation Sans", sans-serif;font-size:13.5px;color:#0d0d0d;font-weight:bold;transform:scaleX(0.9200);'>Viewer</span>
<span class="t" style='left:981.2px;top:125.5px;font-family:"DejaVu Sans", "Liberation Sans", sans-serif;font-size:13.5px;color:#0d0d0d;font-weight:bold;transform:scaleX(0.9057);'>Presentation</span>
<span class="t" style='left:752.2px;top:154.6px;font-family:"DejaVu Sans", "Liberation Sans", sans-serif;font-size:13.5px;color:#000;transform:scaleX(0.9405);'>Edit</span>
<span class="t" style='left:1473.5px;top:154.6px;font-family:"DejaVu Sans", "Liberation Sans", sans-serif;font-size:13.5px;color:#000;'>Publish</span>
<span class="t" style='left:672.4px;top:212.1px;font-family:"Liberation Sans", sans-serif;font-size:20px;color:#373a3c;'>The last three items received the least “frequently” responses display more advanced quantitative</span>
<span class="t" style='left:672.4px;top:244.0px;font-family:"Liberation Sans", sans-serif;font-size:20px;color:#373a3c;'>reasoning and analysis.”Described the methods used to solve a quantitative problem and why</span>
<span class="t" style='left:672.4px;top:275.9px;font-family:"Liberation Sans", sans-serif;font-size:20px;color:#373a3c;transform:scaleX(1.0047);'>they were appropriate” shows 40.3% of students frequently describe methodology. “Decided</span>
<span class="t" style='left:672.4px;top:307.7px;font-family:"Liberation Sans", sans-serif;font-size:20px;color:#373a3c;'>when a solution or inference was reasonable or not reasonable in the context of a problem”</span>
<span class="t" style='left:672.4px;top:339.4px;font-family:"Liberation Sans", sans-serif;font-size:20px;color:#373a3c;transform:scaleX(0.9914);'>indicates that 38.2% of students frequently assess reasonableness. Finally, the item “Constructed</span>
<span class="t" style='left:672.4px;top:371.0px;font-family:"Liberation Sans", sans-serif;font-size:20px;color:#373a3c;transform:scaleX(0.9922);'>a single, coherent argument using several conclusions that were each based on quantitative</span>
<span class="t" style='left:672.4px;top:402.6px;font-family:"Liberation Sans", sans-serif;font-size:20px;color:#373a3c;transform:scaleX(0.9949);'>evidence” has the lowest “frequently” response at 34.2%, which is less common among students.</span>
<span class="t" style='left:672.6px;top:470.2px;font-family:"Liberation Sans", sans-serif;font-size:26.3px;color:#80878d;font-weight:bold;transform:scaleX(1.0598);'>2.1.2</span>
<span class="t" style='left:743.2px;top:470.2px;font-family:"Liberation Sans", sans-serif;font-size:26.3px;color:#484b4e;font-weight:bold;transform:scaleX(1.0088);'>Figure 1. Frequencies of Core Quantitative Reasoning Skills</span>
</body>
</html>
